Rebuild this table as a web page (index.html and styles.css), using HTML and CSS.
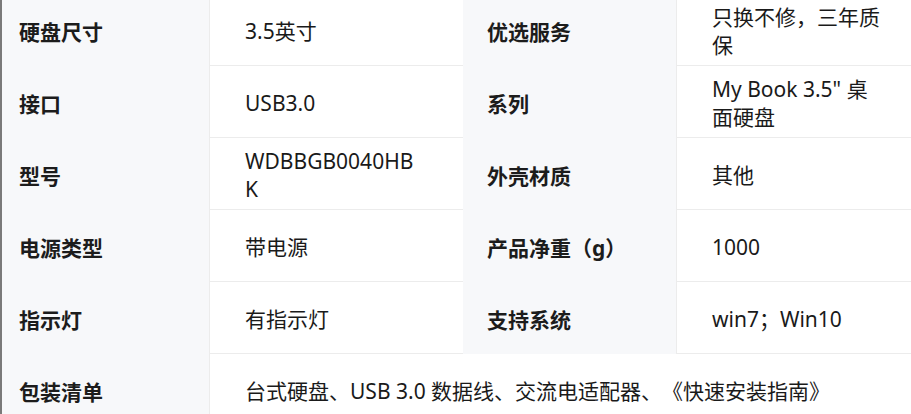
FILE: index.html
```html
<!DOCTYPE html>
<html lang="zh-CN">
<head>
<meta charset="utf-8">
<title>规格参数</title>
<link rel="stylesheet" href="styles.css">
</head>
<body>
<div class="page">
  <div class="spec">
    <div class="label l1">硬盘尺寸</div>
    <div class="value v1">3.5英寸</div>
    <div class="label l2">优选服务</div>
    <div class="value v2">只换不修，三年质保</div>

    <div class="label l1">接口</div>
    <div class="value v1">USB3.0</div>
    <div class="label l2">系列</div>
    <div class="value v2">My Book 3.5" 桌面硬盘</div>

    <div class="label l1">型号</div>
    <div class="value v1 model">WDBBGB0040HBK</div>
    <div class="label l2">外壳材质</div>
    <div class="value v2">其他</div>

    <div class="label l1">电源类型</div>
    <div class="value v1">带电源</div>
    <div class="label l2">产品净重（g）</div>
    <div class="value v2">1000</div>

    <div class="label l1">指示灯</div>
    <div class="value v1">有指示灯</div>
    <div class="label l2">支持系统</div>
    <div class="value v2">win7；Win10</div>

    <div class="label l1">包装清单</div>
    <div class="value wide">台式硬盘、USB 3.0 数据线、交流电适配器、《快速安装指南》</div>
  </div>
</div>
</body>
</html>
```

FILE: styles.css
```css
html, body {
  margin: 0;
  padding: 0;
  background: #ffffff;
}

body {
  overflow: hidden;
  font-family: "Noto Sans", "Noto Sans CJK SC", sans-serif;
  font-size: 21px;
  line-height: 28px;
  color: #1a1a1a;
  text-spacing-trim: space-all;
}

.page {
  width: 960px;
  border-left: 2px solid #7a7a7a;
  margin-top: -6px;
}

.spec {
  display: grid;
  grid-template-columns: 208px 253px 214px 243px;
}

.label,
.value {
  box-sizing: border-box;
  min-height: 72px;
  display: flex;
  align-items: center;
  padding-top: 3px;
}

.label {
  background: #f7f8fa;
  font-weight: 700;
  color: #1c1c1c;
  border-right: 1px solid #ececec;
}

.l1 {
  padding-left: 17px;
}

.l2 {
  padding-left: 24px;
}

.value {
  background: #ffffff;
  border-bottom: 1px solid #ececec;
  padding-left: 35px;
  padding-right: 36px;
}

.model {
  word-break: break-all;
  padding-right: 44px;
}

.wide {
  grid-column: 2 / 5;
}
```
